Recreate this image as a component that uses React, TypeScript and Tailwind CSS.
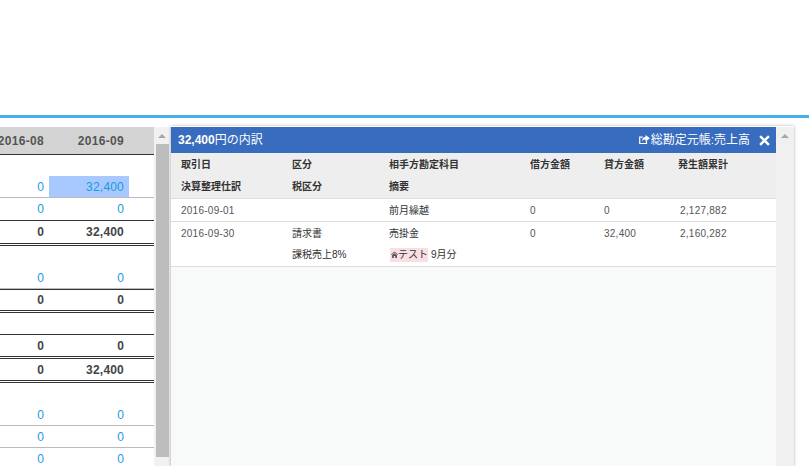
type Row = {
  a?: string;
  b?: string;
  kind?: 'link' | 'total';
  h: string;
  line?: string;
  hit?: boolean;
};

const rows: Row[] = [
  { h: 'h-[21px]' },
  { a: '0', b: '32,400', kind: 'link', hit: true, h: 'h-[22px]', line: 'border-b border-[#bbbbbb]' },
  { a: '0', b: '0', kind: 'link', h: 'h-[23px]', line: 'border-b border-[#333333]' },
  { a: '0', b: '32,400', kind: 'total', h: 'h-[25px]', line: 'border-b-[3px] border-double border-[#333333]' },
  { h: 'h-[21px]' },
  { a: '0', b: '0', kind: 'link', h: 'h-[22px]', line: 'border-b border-[#bbbbbb]' },
  { a: '0', b: '0', kind: 'total', h: 'h-[24px]', line: 'border-t border-b-[3px] border-t-[#333333] border-b-[#333333] [border-bottom-style:double]' },
  { h: 'h-[22px]', line: 'border-b border-[#333333]' },
  { a: '0', b: '0', kind: 'total', h: 'h-[24px]', line: 'border-b-[3px] border-double border-[#333333]' },
  { a: '0', b: '32,400', kind: 'total', h: 'h-[24px]', line: 'border-b-[3px] border-double border-[#333333]' },
  { h: 'h-[21px]' },
  { a: '0', b: '0', kind: 'link', h: 'h-[22px]', line: 'border-b border-[#bbbbbb]' },
  { a: '0', b: '0', kind: 'link', h: 'h-[22px]', line: 'border-b border-[#bbbbbb]' },
  { a: '0', b: '0', kind: 'link', h: 'h-[22px]' },
];

function Cell({ value, kind, hit }: { value?: string; kind?: Row['kind']; hit?: boolean }) {
  return (
    <div
      className={`w-[80px] h-full flex items-center justify-end pr-[5px] tracking-[0.2px] ${hit ? 'bg-[#a8c9ff]' : ''} ${
        kind === 'link' ? 'text-[#1a9ae0]' : 'text-[#444444] font-bold'
      }`}
    >
      {value}
    </div>
  );
}

function LeftTable() {
  return (
    <div className="w-[154px] shrink-0 overflow-hidden text-[12px]">
      <div className="h-[28px] bg-[#d4d4d4] border-b border-[#333333] flex justify-end pr-[25px] items-center font-bold text-[#555555] tracking-[0.3px]">
        <div className="w-[80px] shrink-0 text-right pr-[5px]">2016-08</div>
        <div className="w-[80px] shrink-0 text-right pr-[5px]">2016-09</div>
      </div>
      {rows.map((r, i) => (
        <div key={i} className={`${r.h} ${r.line ?? ''} flex justify-end pr-[25px]`}>
          <div className="shrink-0">
            <Cell value={r.a} kind={r.kind} />
          </div>
          <div className="shrink-0">
            <Cell value={r.b} kind={r.kind} hit={r.hit} />
          </div>
        </div>
      ))}
    </div>
  );
}

function Scrollbar() {
  return (
    <div className="w-[17px] shrink-0 flex flex-col items-center bg-[#f1f1f1] pt-[7px] pr-px">
      <div className="w-0 h-0 border-x-[4px] border-x-transparent border-b-[4px] border-b-[#a6a6a6]" />
      <div className="mt-[6px] w-[13px] h-[313px] bg-[#bdbdbd]" />
    </div>
  );
}

function ShareIcon() {
  return (
    <svg viewBox="0 0 11 10" className="w-[11px] h-[10px] mr-px" fill="none">
      <path d="M7.5 6v2.5H.7V2.2h3" stroke="white" strokeWidth="1.2" />
      <path d="M6.5 0 11 3.2 6.5 6.4V4.6C4.8 4.6 3.6 5.2 2.9 6.6 3 3.9 4.4 2 6.5 1.8Z" fill="white" />
    </svg>
  );
}

function CloseIcon() {
  return (
    <svg viewBox="0 0 10 10" className="w-[11px] h-[11px]" fill="none">
      <path d="M1 1l8 8M9 1 1 9" stroke="white" strokeWidth="2.2" />
    </svg>
  );
}

function HomeIcon() {
  return (
    <svg viewBox="0 0 8 8" className="w-[7px] h-[7px]" fill="#555555">
      <path d="M4 .5 0 4l.6.6L4 1.7l3.4 2.9L8 4ZM1.2 4.8V8h2V5.7h1.6V8h2V4.8L4 2.5Z" />
    </svg>
  );
}

const grid = 'grid grid-cols-[111px_97px_141px_74px_74px_1fr] pl-[10px] items-center';
const num = 'text-[#555555] tracking-[0.25px]';

function Panel() {
  return (
    <div className="flex-1 flex min-w-0 mr-[15px] shadow-[0_0_3px_rgba(0,0,0,0.3)] h-[340px] -mt-px pt-px">
      <div className="w-[605px] shrink-0 bg-[#f8fafa] text-[10px] text-[#333333]">
        <div className="h-[26px] bg-[#386cbe] text-white flex items-center justify-between pl-[7px] pr-[6px] text-[12px]">
          <div>
            <span className="font-bold">32,400</span>円の内訳
          </div>
          <div className="flex items-center">
            <ShareIcon />
            <span>総勘定元帳:売上高</span>
            <span className="ml-[9px] flex">
              <CloseIcon />
            </span>
          </div>
        </div>
        <div className="bg-[#eeeeee] border-b border-[#dddddd] h-[46px] font-bold">
          <div className={`${grid} h-[22px]`}>
            <div>取引日</div>
            <div>区分</div>
            <div>相手方勘定科目</div>
            <div>借方金額</div>
            <div>貸方金額</div>
            <div>発生額累計</div>
          </div>
          <div className={`${grid} h-[22px]`}>
            <div>決算整理仕訳</div>
            <div>税区分</div>
            <div>摘要</div>
          </div>
        </div>
        <div className="bg-white border-b border-[#dddddd]">
          <div className={`${grid} h-[22px]`}>
            <div className={num}>2016-09-01</div>
            <div />
            <div>前月繰越</div>
            <div className={num}>0</div>
            <div className={num}>0</div>
            <div className={`${num} pl-[2px]`}>2,127,882</div>
          </div>
        </div>
        <div className="bg-white border-b border-[#dddddd]">
          <div className={`${grid} h-[22px]`}>
            <div className={num}>2016-09-30</div>
            <div>請求書</div>
            <div>売掛金</div>
            <div className={num}>0</div>
            <div className={num}>32,400</div>
            <div className={`${num} pl-[2px]`}>2,160,282</div>
          </div>
          <div className={`${grid} h-[22px] pb-px`}>
            <div />
            <div>課税売上8%</div>
            <div className="flex items-center pl-px">
              <span className="flex items-center bg-[#f9dfe4] h-[14px] pl-px">
                <HomeIcon />
                テスト
              </span>
              <span className="ml-[3px]">9月分</span>
            </div>
          </div>
        </div>
      </div>
      <div className="flex-1 bg-[#f0f0f0] flex justify-center pt-[7px]">
        <div className="w-0 h-0 border-x-[4px] border-x-transparent border-b-[4px] border-b-[#a6a6a6]" />
      </div>
    </div>
  );
}

export default function App() {
  return (
    <div className="w-[809px] h-[466px] overflow-hidden bg-white font-['Liberation_Sans','Noto_Sans_CJK_JP',sans-serif]">
      <div className="h-[115px]" />
      <div className="h-[3px] bg-[#45b0e8]" />
      <div className="flex pt-[9px]">
        <LeftTable />
        <Scrollbar />
        <Panel />
      </div>
    </div>
  );
}
